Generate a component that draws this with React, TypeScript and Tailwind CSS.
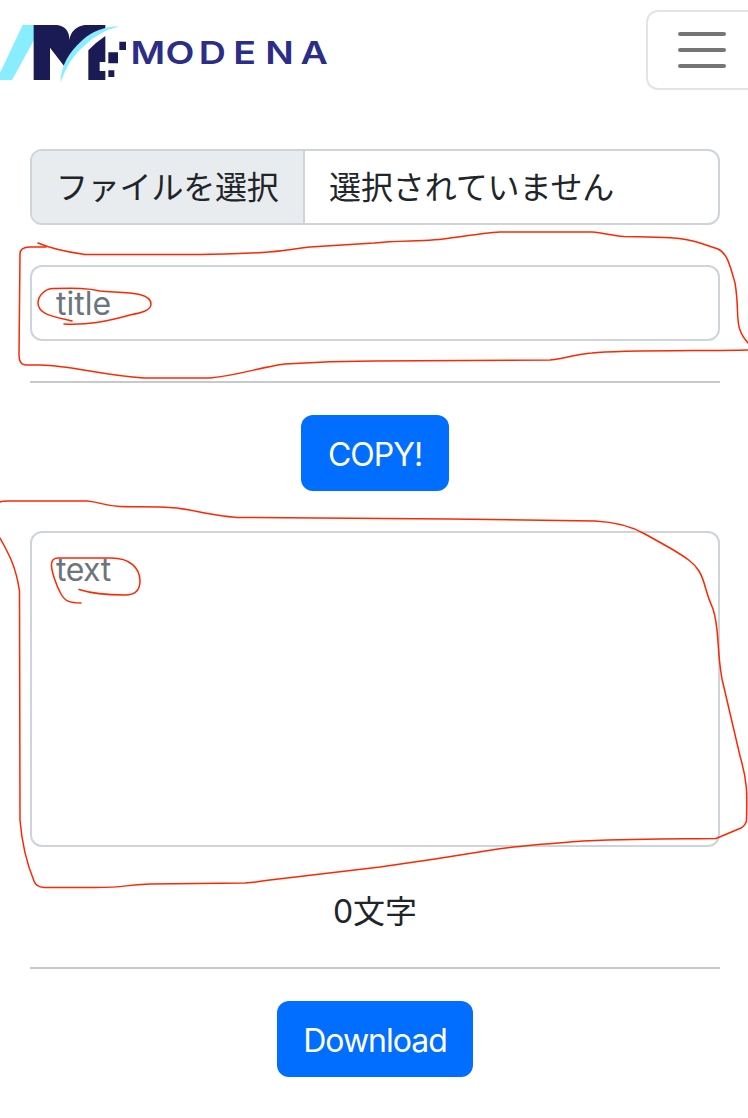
function Logo() {
  return (
    <svg className="h-[90px] w-[340px]" viewBox="0 0 1020 270" role="img" aria-label="MODENA">
      <path d="M68 75H102V120L36 240H-10Z" fill="#87edff" />
      <path
        d="M101 75H170Q208 79 208 120Q214 82 254 75H316V88Q264 110 230 147Q208 173 195 202L150 143V240H101Z"
        fill="#1a1b55"
      />
      <path d="M316 108V186H299V213H316V240H265V151Q286 128 316 108Z" fill="#1a1b55" />
      <path d="M358 79Q291 80 245 122C207 157 183 195 181 249C205 187 222 166 249 141Q294 95 358 79Z" fill="#87edff" />
      <path d="M358 125H378V150H358ZM325 157H354V190H325ZM325 211H343V231H325Z" fill="#1a1b55" />
      <text
        transform="scale(1.2 1)"
        x="326 414 497 583 663 751"
        y="192"
        fontSize="94"
        fontWeight="600"
        fontFamily="Inter, sans-serif"
        fill="#2b2d87"
      >
        MODENA
      </text>
    </svg>
  );
}

function Annotations() {
  return (
    <svg
      className="pointer-events-none absolute inset-0 h-[1118px] w-[748px]"
      viewBox="0 0 748 1118"
      fill="none"
      stroke="#ff2600"
      strokeWidth="1.5"
      strokeLinecap="round"
      strokeLinejoin="round"
      aria-hidden="true"
    >
      <path d="M38 243C52 249 67 252 85 254.500H200C280 253 275 251 310 247L374 243C400 240 430 242 450 238C472 235 485 233 500 232H592C605 233 612 236 624 236.500C650 237 680 236 700 243L718 249C727 253 730 265 735 283C739 306 736 320 740 330Q742 336 748 343" />
      <path d="M46 247H30Q20 247 20 254L19 355Q19 365 26 365H40C75 366 100 375 144 378H210C240 375 261 367 285 364C315 362 350 361 374 361L550 360C568 358 575 354 592 353C620 350 700 351 748 350" />
      <path d="M72 321C56 317 38 315 38 303C38 296 45 288 54 288.500C76 288 88 288 100 291C122 293 151 291 151 304C151 311 140 313 130 315C105 322 88 325 64 324" />
      <path d="M0 502Q2 501 8 501H87C100 502 105 506 120 506.500C140 507 155 506 177 508C198 511 220 517 240 517.500L450 519L595 521C615 522 631 526 645 534L670 548C687 558 694 563 699 571C706 583 704 589 713 609C720 631 716 645 722 679L740 756C748 783 747 796 746.500 820Q746 825 741 828L716 838.500C680 839 650 838 583 841C558 843 525 845 498 849L435 859L380 867L270 880C260 881 258 882.500 245 883L150 884C120 885 130 887.500 95 887.500H44Q36 887 34 881C27 864 22 845 20 820L19.500 591C16 567 9 554 0 538" />
      <path d="M81 603C69 603 65 601 61 594C57 587 51 571 51.500 564Q52 558 58 558H111C130 558 140 568 140 581C140 592 133 595 125 595C108 595 93 594 79 589.500" />
    </svg>
  );
}

function Divider() {
  return <hr className="h-0.5 w-full border-0 bg-[#c8c9ca]" />;
}

export default function App() {
  return (
    <div className="relative h-[1118px] w-[748px] overflow-hidden bg-white font-['Inter','Noto_Sans_CJK_JP',sans-serif] text-[32px] leading-[48px] text-[#212529]">
      <header className="flex h-[100px] items-start justify-between">
        <Logo />
        <button
          type="button"
          aria-label="Menu"
          className="-mr-3 mt-2.5 flex h-20 w-[114px] shrink-0 flex-col items-center justify-center gap-3 rounded-xl border-2 border-[#e4e4e4]"
        >
          <span className="mr-0.5 h-1 w-12 rounded-full bg-[#757575]" />
          <span className="mr-0.5 h-1 w-12 rounded-full bg-[#757575]" />
          <span className="mr-0.5 h-1 w-12 rounded-full bg-[#757575]" />
        </button>
      </header>

      <main className="flex flex-col items-center pl-[30px] pr-7 pt-[49px]">
        <div className="flex h-[76px] w-full items-stretch overflow-hidden rounded-xl border-2 border-[#ced4da] tracking-[-0.1px]">
          <button
            type="button"
            className="flex w-[273px] shrink-0 items-center border-r-2 border-[#ced4da] bg-[#e9ecef] pl-6 pt-0.5 tracking-[-0.2px]"
          >
            ファイルを選択
          </button>
          <span className="flex items-center pl-6 pt-0.5">選択されていません</span>
        </div>

        <input
          type="text"
          placeholder="title"
          className="mt-10 h-[76px] w-full rounded-xl border-2 border-[#ced4da] bg-white px-6 pt-px placeholder:text-[#6c757d]"
        />

        <div className="mt-10 w-full">
          <Divider />
        </div>

        <button
          type="button"
          className="mt-8 h-[76px] w-[148px] rounded-xl bg-[#026eff] pt-[3px] tracking-[-1px] text-white"
        >
          COPY!
        </button>

        <textarea
          placeholder="text"
          className="mt-10 h-[316px] w-full resize-none rounded-xl border-2 border-[#ced4da] bg-white px-6 pb-3 pt-[13px] tracking-[-0.5px] placeholder:text-[#6c757d]"
        />

        <p className="mt-10 pt-px">0文字</p>

        <div className="mt-[31px] w-full">
          <Divider />
        </div>

        <button
          type="button"
          className="mt-8 h-[76px] w-[196px] rounded-xl bg-[#026eff] pt-[3px] tracking-[-1px] text-white"
        >
          Download
        </button>
      </main>

      <Annotations />
    </div>
  );
}
